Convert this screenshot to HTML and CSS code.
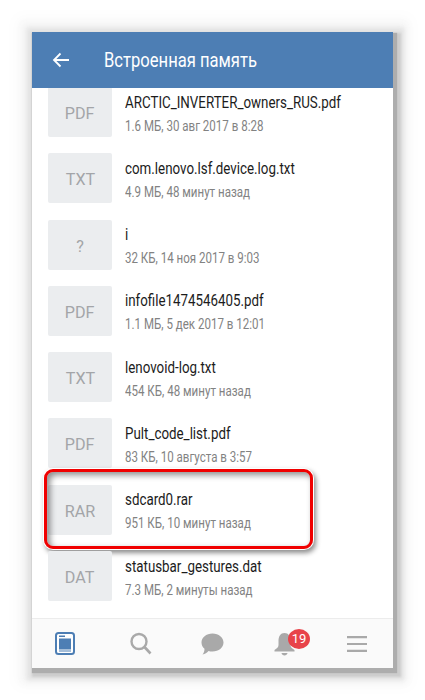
FILE: index.html
```html
<!DOCTYPE html>
<html lang="ru">
<head>
  <meta charset="UTF-8" />
  <title>Встроенная память</title>
  <link rel="stylesheet" href="styles.css">
</head>
<body>

<div class="screen">
  <header class="topbar">
    <svg class="back" width="18" height="16" viewBox="0 0 18 16"><path d="M17 8H2M8.500 1.500 2 8l6.500 6.500" fill="none" stroke="#fff" stroke-width="1.800"/></svg>
    <h1><span>Встроенная память</span></h1>
  </header>

  <main class="files">
    <div class="row first">
      <div class="thumb"><span>PDF</span></div>
      <div class="info"><p class="name">ARCTIC_INVERTER_owners_RUS.pdf</p><p class="meta">1.6 МБ, 30 авг 2017 в 8:28</p></div>
    </div>
    <div class="row">
      <div class="thumb"><span>TXT</span></div>
      <div class="info"><p class="name">com.lenovo.lsf.device.log.txt</p><p class="meta">4.9 МБ, 48 минут назад</p></div>
    </div>
    <div class="row">
      <div class="thumb"><span>?</span></div>
      <div class="info"><p class="name">i</p><p class="meta">32 КБ, 14 ноя 2017 в 9:03</p></div>
    </div>
    <div class="row">
      <div class="thumb"><span>PDF</span></div>
      <div class="info"><p class="name">infofile1474546405.pdf</p><p class="meta">1.1 МБ, 5 дек 2017 в 12:01</p></div>
    </div>
    <div class="row">
      <div class="thumb"><span>TXT</span></div>
      <div class="info"><p class="name">lenovoid-log.txt</p><p class="meta">454 КБ, 48 минут назад</p></div>
    </div>
    <div class="row">
      <div class="thumb"><span>PDF</span></div>
      <div class="info"><p class="name">Pult_code_list.pdf</p><p class="meta">83 КБ, 10 августа в 3:57</p></div>
    </div>
    <div class="row picked">
      <div class="thumb"><span>RAR</span></div>
      <div class="info"><p class="name">sdcard0.rar</p><p class="meta">951 КБ, 10 минут назад</p></div>
      <div class="marker"></div>
    </div>
    <div class="row">
      <div class="thumb"><span>DAT</span></div>
      <div class="info"><p class="name">statusbar_gestures.dat</p><p class="meta">7.3 МБ, 2 минуты назад</p></div>
    </div>
  </main>

  <nav class="tabs">
    <div class="tab"><svg width="20" height="23" viewBox="0 0 20 23"><rect x="1" y="1" width="18" height="21" rx="2.500" fill="#fff" stroke="#4d7eb4" stroke-width="2"/><rect x="4" y="3.500" width="6" height="1.500" fill="#4d7eb4"/><rect x="4" y="6.500" width="12" height="11" fill="#4d7eb4"/><rect x="4" y="18.500" width="12" height="1" fill="#4d7eb4"/></svg></div>
    <div class="tab search"><svg width="22" height="23" viewBox="0 0 22 23"><circle cx="9" cy="9.500" r="7.500" fill="none" stroke="#a9a9a9" stroke-width="2.400"/><path d="M14.500 15 20.500 21.500" stroke="#a9a9a9" stroke-width="2.600" fill="none"/></svg></div>
    <div class="tab chat"><svg width="23" height="22" viewBox="0 0 23 22"><path d="M11.500 .5C17.800 .5 22.500 4.500 22.500 9.500S17.800 18.500 11.500 18.500C10 18.500 8.700 18.300 7.500 17.900 6 19.500 4 21 1.500 21.500 3 19.800 3.500 18 3.500 15.800 1.500 14.200 .5 12 .5 9.500 .5 4.500 5.200 .5 11.500 .5Z" fill="#a9a9a9"/></svg></div>
    <div class="tab bell">
      <svg width="21" height="24" viewBox="0 0 21 24"><path d="M10.500 1C14.500 1 16.500 4.500 16.500 8.500V13C16.500 15 18 16.500 20.500 18V19.500H.5V18C3 16.500 4.500 15 4.500 13V8.500C4.500 4.500 6.500 1 10.500 1Z" fill="#a9a9a9"/><path d="M7.500 21H13.500C13.300 22.500 12 23.500 10.500 23.500S7.700 22.500 7.500 21Z" fill="#a9a9a9"/></svg>
      <span class="badge">19</span>
    </div>
    <div class="tab menu"><svg width="20" height="16" viewBox="0 0 20 16"><path d="M0 1.200H20M0 8H20M0 14.800H20" stroke="#a9a9a9" stroke-width="2.200" fill="none"/></svg></div>
  </nav>
</div>

</body>
</html>
```

FILE: styles.css
```css
body {
  margin: 0;
  padding: 32px;
  background-color: #fff;
  font-family: Roboto, sans-serif;
}
p {
  margin: 0;
}
.screen {
  width: 361px;
  height: 636px;
  display: flex;
  flex-direction: column;
  background-color: #fff;
  box-shadow: 2px 3px 1px 2px #adadad, 4px 5px 2px 4px #cdcdcd, 3px 4px 4px 8px #e3e3e3, 2px 3px 8px 12px #f3f3f3, 1px 2px 14px 18px #fbfbfb;
}
.topbar {
  height: 56px;
  flex: none;
  display: flex;
  align-items: center;
  background-color: #4d7eb4;
  color: #fff;
}
.back {
  margin-left: 20px;
  flex: none;
}
.topbar h1 {
  margin: 0 0 0 34px;
  font-size: 21px;
  font-weight: 400;
  white-space: nowrap;
}
.topbar h1 span {
  display: block;
  transform: scaleX(.79);
  transform-origin: left center;
}
.files {
  flex: 1;
  overflow: hidden;
  display: flex;
  flex-direction: column;
  gap: 16.3px;
  padding: 0 16px;
  background-color: #fff;
}
.row {
  position: relative;
  height: 50px;
  flex: none;
  display: flex;
  gap: 13px;
}
.row.first {
  margin-top: -1px;
}
.thumb {
  width: 64px;
  height: 50px;
  box-sizing: border-box;
  padding-top: 2px;
  flex: none;
  display: flex;
  align-items: center;
  justify-content: center;
  border-radius: 2px;
  background-color: #ebedef;
  color: #a3a5a8;
  font-size: 17px;
}
.thumb span {
  transform: scaleX(.95);
}
.info {
  display: flex;
  flex-direction: column;
  gap: 5px;
  padding-top: 4.500px;
}
.name,
.meta {
  transform-origin: left center;
  white-space: nowrap;
}
.name {
  font-size: 17px;
  line-height: 20px;
  color: #1c1c1c;
  transform: scaleX(.785);
}
.meta {
  font-size: 15px;
  line-height: 18px;
  color: #828282;
  transform: scaleX(.77);
}
.marker {
  position: absolute;
  left: -4px;
  top: -16px;
  width: 263px;
  height: 74px;
  border: 3px solid #f00000;
  border-radius: 9px;
  box-shadow: 0 0 0 1px #fff, 2px 3px 5px 1px rgba(0, 0, 0, .45), inset 3px 3px 6px rgba(0, 0, 0, .45);
}
.tabs {
  height: 50px;
  flex: none;
  display: flex;
  align-items: center;
  padding-left: 21px;
  background-color: #fafafa;
  border-top: 1px solid #ececec;
  box-sizing: border-box;
}
.tab {
  position: relative;
  width: 24px;
  display: flex;
  justify-content: center;
}
.search {
  margin-left: 52px;
}
.chat {
  margin-left: 47px;
}
.bell {
  margin-left: 48px;
}
.menu {
  margin-left: 49px;
}
.badge {
  position: absolute;
  left: 16px;
  top: -3px;
  width: 22px;
  height: 20px;
  border-radius: 50%;
  display: flex;
  align-items: center;
  justify-content: center;
  background-color: #e8434a;
  color: #fff;
  font-size: 13px;
}
```
